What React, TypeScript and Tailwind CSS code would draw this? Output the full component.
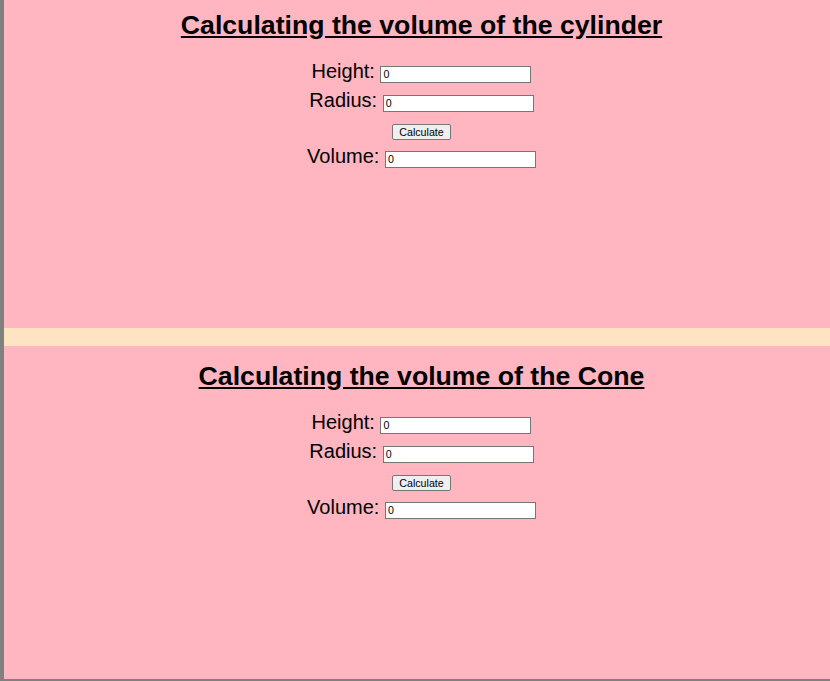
import React from 'react'

const inputCls =
  'inline-block w-[151px] h-[17px] border border-[#767676] bg-white px-[2px] text-[10.67px] leading-normal text-black align-baseline'

function Row({ label, className = '' }: { label: string; className?: string }) {
  return (
    <div className={`text-center text-[20px] leading-[27px] ${className}`}>
      {label}{' '}
      <input type="text" defaultValue="0" className={inputCls} />
    </div>
  )
}

function Calculator({ title, className }: { title: string; className: string }) {
  return (
    <section className={`bg-[#ffb6c1] pl-[9px] ${className}`}>
      <h1 className="text-center text-[26.67px] font-bold underline leading-[31px]">{title}</h1>
      <div className="mt-[17px]">
        <Row label="Height:" />
        <Row label="Radius:" className="mt-[2px]" />
        <div className="flex h-[29px] justify-center pt-[10px]">
          <button
            type="button"
            className="h-[16px] rounded-[2px] border border-[#767676] bg-[#efefef] px-[6px] text-[10.67px] leading-none text-black"
          >
            Calculate
          </button>
        </div>
        <Row label="Volume:" />
      </div>
    </section>
  )
}

export default function App() {
  return (
    <div className="flex h-[681px] w-[830px] flex-col border-b-2 border-l-4 border-[#808080] font-['Liberation_Sans',Arial,sans-serif] text-black">
      <Calculator title="Calculating the volume of the cylinder" className="h-[328px] pt-[10px]" />
      <div className="h-[18px] bg-[#ffe4c4]" />
      <Calculator title="Calculating the volume of the Cone" className="flex-1 pt-[15px]" />
    </div>
  )
}
